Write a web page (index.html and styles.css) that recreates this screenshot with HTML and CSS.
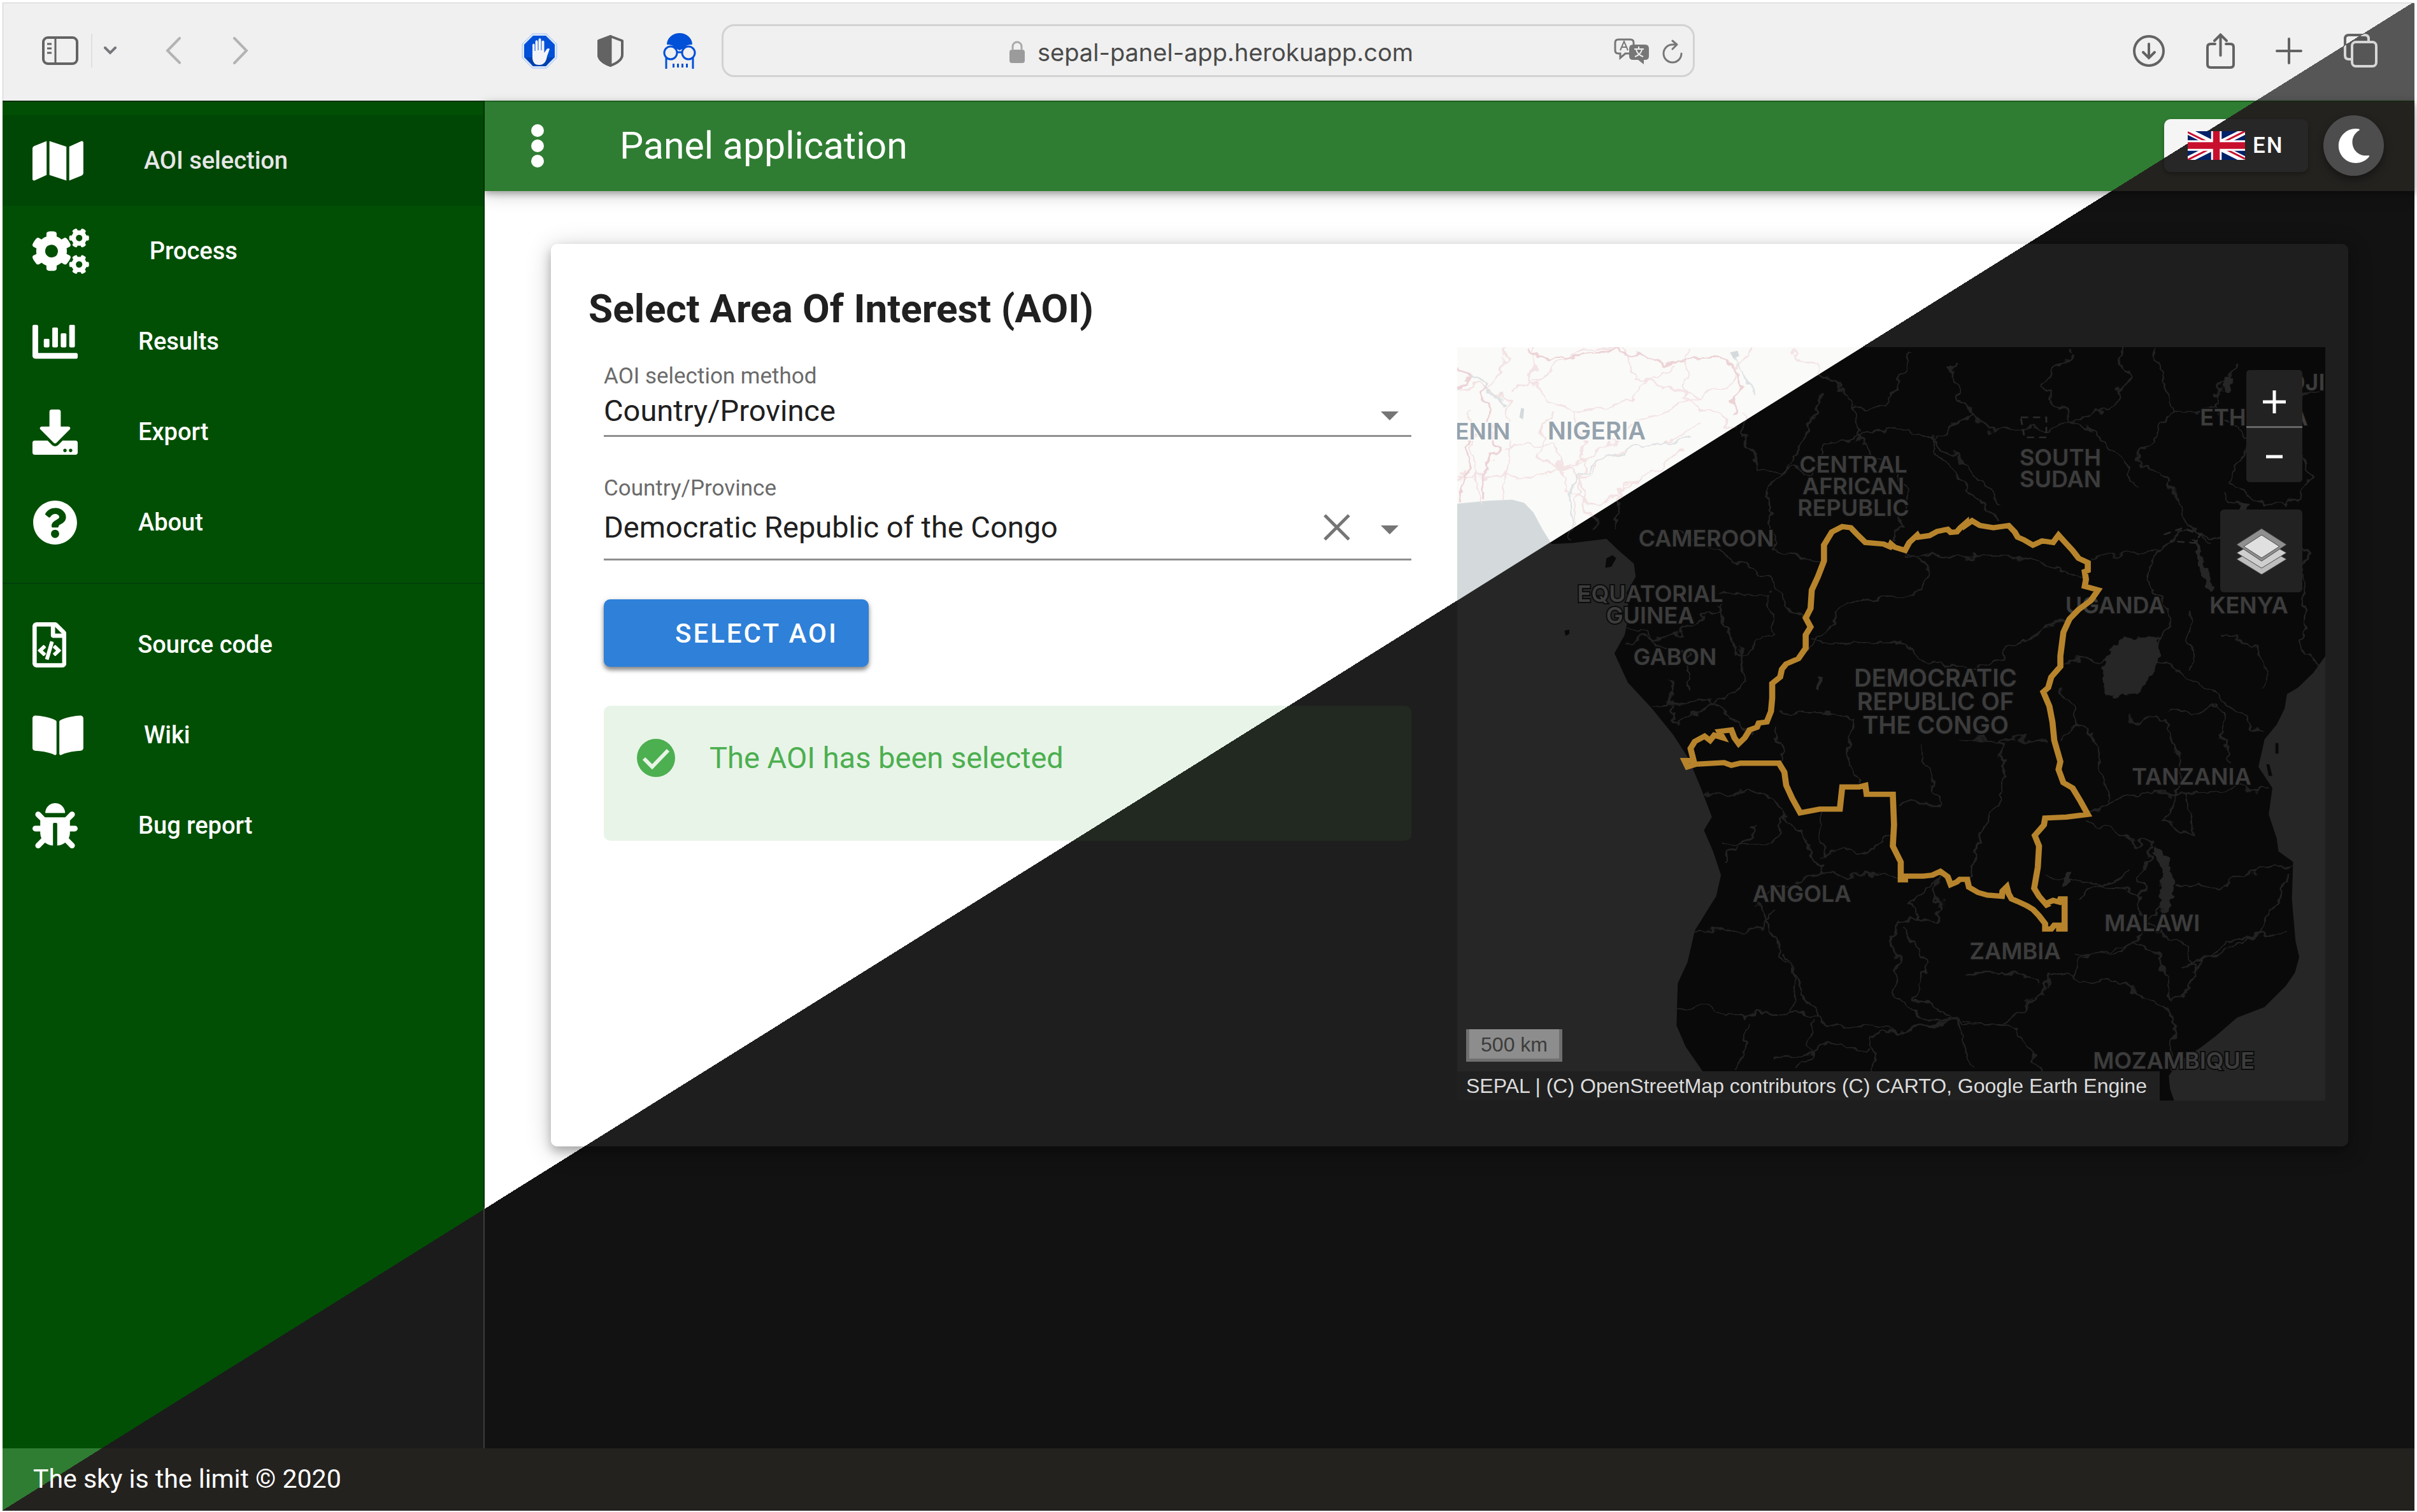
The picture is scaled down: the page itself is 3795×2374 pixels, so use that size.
FILE: index.html
```html
<!DOCTYPE html>
<html lang="en">
<head>
<meta charset="utf-8">
<title>Panel application</title>
<link rel="stylesheet" href="styles.css">
</head>
<body>
<div class="window">
  <header class="browser">
    <div class="browser-nav">
      <button class="tool" aria-label="Show sidebar"><svg width="57" height="45" viewBox="0 0 57 45" fill="none" stroke="#636363" stroke-width="4"><rect x="2" y="2" width="53" height="41" rx="7"/><path d="M21 2v41M8 12h7M8 19h7M8 26h7" stroke-width="3"/></svg></button>
      <span class="tool-rule"></span>
      <button class="tool" aria-label="Tab groups"><svg width="21" height="13" viewBox="0 0 21 13" fill="none" stroke="#77777c" stroke-width="4" stroke-linecap="round"><path d="M2 2l8 8 8-8"/></svg></button>
      <button class="tool tool-back" aria-label="Back"><svg width="25" height="43" viewBox="0 0 25 43" fill="none" stroke="#b3b3b3" stroke-width="4" stroke-linecap="round"><path d="M22 2L3 21.500l19 19"/></svg></button>
      <button class="tool tool-forward" aria-label="Forward"><svg width="25" height="43" viewBox="0 0 25 43" fill="none" stroke="#b3b3b3" stroke-width="4" stroke-linecap="round"><path d="M3 2l19 19.500L3 41"/></svg></button>
    </div>
    <div class="browser-extensions">
      <button class="tool" aria-label="Content blocker"><svg width="56" height="56" viewBox="0 0 56 56"><path d="M17 1h22l16 16v22L39 55H17L1 39V17z" fill="#dfe9fa" stroke="#9fc0f5"/><path d="M18 4h20l14 14v20L38 52H18L4 38V18z" fill="#0050d8"/><path d="M6 38h44L38 52H18z" fill="#0041ae"/><path d="M17 18q2-3 3.500 0v10h1V13q2-4 4 0v14h1V10q2-4 4 0v17h1V13q2-3 4 0v18l4-6q3-2 4.500 0-1 3-4 11-2 14-12.500 14Q18 50 17 40z" fill="#f4f4f8"/></svg></button>
      <button class="tool" aria-label="Privacy report"><svg width="41" height="50" viewBox="0 0 41 50" fill="none" stroke="#636363" stroke-width="4" stroke-linejoin="round"><path d="M20.500 2L2 9v22q0 10 18.500 17Q39 41 39 31V9z"/><path d="M20.500 2L2 9v22q0 10 18.500 17z" fill="#636363"/></svg></button>
      <button class="tool" aria-label="Ghostly reader"><svg width="52" height="56" viewBox="0 0 52 56"><path d="M6 18a20 18 0 0 1 40 0q-9-1-14 6l-6 3-6-3q-5-7-14-6z" fill="#0050d8"/><g fill="none" stroke="#0050d8" stroke-width="3"><circle cx="12" cy="31" r="10"/><circle cx="40" cy="31" r="10"/><path d="M22 30h8M5 39v17M47 39v17"/><path d="M15 51h3M22 51h3M29 51h3M36 51h3" stroke-width="6"/></g></svg></button>
    </div>
    <div class="address">
      <div class="address-host">
        <svg width="24" height="36" viewBox="0 0 24 36"><rect y="14" width="24" height="21" rx="4" fill="#9b9b9b"/><path d="M5 15V9a7 7 0 0 1 14 0v6" fill="none" stroke="#a9a9a9" stroke-width="3"/></svg>
        <span>sepal-panel-app.herokuapp.com</span>
      </div>
      <button class="tool" aria-label="Translate"><svg width="56" height="41" viewBox="0 0 56 41"><path d="M24 24h-6l-8 7v-7H7q-5 0-5-5V7q0-5 5-5h19q5 0 5 5v3" fill="none" stroke="#777" stroke-width="3"/><path d="M10 19l6-14 6 14M12 14h8" fill="none" stroke="#777" stroke-width="2"/><path d="M30 10h19q6 0 6 6v12q0 6-6 6h-2v7l-9-7h-8q-6 0-6-6V16q0-6 6-6z" fill="#777"/><path d="M32 17h15M39 13v4M35 18q2 8 11 11M44 18q-2 8-11 11" fill="none" stroke="#f0f0f0" stroke-width="2"/></svg></button>
      <button class="tool" aria-label="Reload"><svg width="32" height="38" viewBox="0 0 32 38" fill="none" stroke="#777" stroke-width="3" stroke-linecap="round" stroke-linejoin="round"><path d="M30 22a14 14 0 1 1-14-14h7M16 2l7 6-7 7"/></svg></button>
    </div>
    <div class="browser-actions">
      <button class="tool" aria-label="Downloads"><svg width="50" height="50" viewBox="0 0 50 50" fill="none" stroke="#636363" stroke-width="4" stroke-linecap="round"><circle cx="25" cy="25" r="23"/><path d="M25 14v21M16 27l9 9 9-9"/></svg></button>
      <button class="tool" aria-label="Share"><svg width="45" height="56" viewBox="0 0 45 56" fill="none" stroke="#636363" stroke-width="4" stroke-linecap="round"><path d="M14 17H7q-5 0-5 5v27q0 5 5 5h31q5 0 5-5V22q0-5-5-5h-7M22.500 35V3M13 12l9.500-9.500L32 12"/></svg></button>
      <button class="tool" aria-label="New tab"><svg width="42" height="42" viewBox="0 0 42 42" fill="none" stroke="#636363" stroke-width="4" stroke-linecap="round"><path d="M21 2v38M2 21h38"/></svg></button>
      <button class="tool" aria-label="Show tabs"><svg width="53" height="53" viewBox="0 0 53 53" fill="none" stroke-width="4"><defs><linearGradient id="tabs-split" gradientUnits="userSpaceOnUse" x1="8" y1="-5" x2="26" y2="24"><stop offset=".5" stop-color="#636363"/><stop offset=".5" stop-color="#d6d6d6"/></linearGradient></defs><g stroke="url(#tabs-split)"><path d="M13 40H8q-6 0-6-6V8q0-6 6-6h25q6 0 6 6v5"/><rect x="13" y="13" width="38" height="38" rx="6"/></g></svg></button>
    </div>
  </header>

  <div class="app">
    <nav class="drawer">
      <a class="nav-item active" href="#aoi"><svg viewBox="0 0 576 512"><path d="M0 117.660v346.320c0 11.320 11.430 19.060 21.940 14.860L160 416V32L20.120 87.950A32.006 32.006 0 0 0 0 117.660zM192 416l192 64V96L192 32v384zM554.060 33.160L416 96v384l139.880-55.950A31.996 31.996 0 0 0 576 394.340V48.020c0-11.320-11.430-19.060-21.940-14.860z"/></svg><span>AOI selection</span></a>
      <a class="nav-item" href="#process"><svg viewBox="0 0 640 512"><defs><path id="cog-small" d="M512.100 191l-8.200 14.300c-3 5.300-9.400 7.500-15.100 5.400-11.800-4.400-22.600-10.700-32.100-18.600-4.600-3.800-5.800-10.500-2.800-15.700l8.200-14.300c-6.900-8-12.300-17.300-15.900-27.400h-16.500c-6 0-11.200-4.300-12.200-10.300-2-12-2.100-24.600 0-37.100 1-6 6.200-10.400 12.200-10.400h16.500c3.600-10.100 9-19.400 15.900-27.400l-8.200-14.300c-3-5.200-1.900-11.900 2.800-15.700 9.500-7.900 20.400-14.200 32.100-18.600 5.700-2.100 12.100.1 15.100 5.400l8.200 14.300c10.500-1.900 21.200-1.900 31.700 0L552 6.300c3-5.300 9.400-7.500 15.100-5.400 11.800 4.400 22.600 10.700 32.100 18.600 4.600 3.800 5.800 10.500 2.800 15.700l-8.200 14.300c6.900 8 12.300 17.300 15.900 27.400h16.500c6 0 11.200 4.300 12.200 10.300 2 12 2.100 24.600 0 37.100-1 6-6.200 10.400-12.200 10.400h-16.500c-3.600 10.100-9 19.400-15.900 27.400l8.200 14.300c3 5.200 1.900 11.900-2.800 15.700-9.500 7.900-20.400 14.200-32.100 18.600-5.700 2.100-12.100-.1-15.100-5.400l-8.200-14.300c-10.400 1.900-21.200 1.900-31.700 0zm-10.500-58.800c38.500 29.600 82.400-14.300 52.800-52.800-38.500-29.700-82.400 14.300-52.800 52.800z"/></defs><use href="#cog-small"/><use href="#cog-small" y="300"/><path d="M386.300 286.100l33.700 16.800c10.100 5.800 14.500 18.100 10.500 29.100-8.900 24.200-26.400 46.400-42.600 65.800-7.400 8.900-20.200 11.100-30.300 5.300l-29.100-16.800c-16 13.700-34.600 24.600-54.900 31.700v33.600c0 11.600-8.300 21.600-19.700 23.600-24.600 4.200-50.400 4.400-75.900 0-11.500-2-20-11.900-20-23.600V418c-20.300-7.200-38.900-18-54.900-31.700L74 403c-10 5.800-22.900 3.600-30.300-5.300-16.200-19.400-33.300-41.600-42.200-65.700-4-10.900.4-23.200 10.500-29.100l33.300-16.800c-3.900-20.900-3.900-42.400 0-63.400L12 205.800c-10.100-5.800-14.600-18.100-10.500-29 8.900-24.200 26-46.400 42.200-65.800 7.400-8.900 20.200-11.100 30.300-5.300l29.100 16.800c16-13.700 34.600-24.600 54.900-31.700V57.100c0-11.500 8.200-21.500 19.600-23.500 24.600-4.200 50.500-4.400 76-.1 11.500 2 20 11.900 20 23.600v33.600c20.300 7.200 38.900 18 54.900 31.700l29.100-16.800c10-5.800 22.900-3.600 30.300 5.300 16.200 19.400 33.200 41.600 42.100 65.800 4 10.900.1 23.200-10 29.100l-33.700 16.800c3.900 21 3.900 42.500 0 63.500zm-117.600 21.100c59.200-77-28.700-164.900-105.700-105.700-59.200 77 28.700 164.900 105.700 105.700z"/></svg><span>Process</span></a>
      <a class="nav-item" href="#results"><svg viewBox="0 0 512 512"><path d="M332.800 320h38.400c6.400 0 12.800-6.400 12.800-12.800V172.800c0-6.400-6.400-12.800-12.800-12.800h-38.400c-6.400 0-12.800 6.400-12.800 12.800v134.400c0 6.400 6.400 12.800 12.800 12.800zm96 0h38.400c6.400 0 12.800-6.400 12.800-12.800V76.800c0-6.400-6.400-12.800-12.800-12.800h-38.400c-6.400 0-12.800 6.400-12.800 12.800v230.400c0 6.400 6.400 12.800 12.800 12.800zm-288 0h38.400c6.400 0 12.800-6.400 12.800-12.800v-70.400c0-6.400-6.400-12.800-12.800-12.800h-38.400c-6.400 0-12.800 6.400-12.800 12.800v70.400c0 6.400 6.400 12.800 12.800 12.800zm96 0h38.400c6.400 0 12.800-6.400 12.800-12.800V108.800c0-6.400-6.400-12.800-12.800-12.800h-38.400c-6.400 0-12.800 6.400-12.800 12.800v198.400c0 6.400 6.400 12.800 12.800 12.800zM496 384H64V80c0-8.840-7.160-16-16-16H16C7.160 64 0 71.160 0 80v336c0 17.670 14.330 32 32 32h464c8.840 0 16-7.160 16-16v-32c0-8.840-7.160-16-16-16z"/></svg><span>Results</span></a>
      <a class="nav-item" href="#export"><svg viewBox="0 0 512 512"><path d="M216 0h80c13.300 0 24 10.700 24 24v168h87.700c17.800 0 26.700 21.500 14.100 34.100L269.700 378.300c-7.500 7.500-19.800 7.500-27.300 0L90.100 226.100c-12.600-12.600-3.700-34.100 14.100-34.100H192V24c0-13.300 10.700-24 24-24zm296 376v112c0 13.300-10.700 24-24 24H24c-13.300 0-24-10.700-24-24V376c0-13.300 10.700-24 24-24h146.700l49 49c20.100 20.100 52.500 20.100 72.600 0l49-49H488c13.300 0 24 10.700 24 24zm-124 88c0-11-9-20-20-20s-20 9-20 20 9 20 20 20 20-9 20-20zm64 0c0-11-9-20-20-20s-20 9-20 20 9 20 20 20 20-9 20-20z"/></svg><span>Export</span></a>
      <a class="nav-item" href="#about"><svg viewBox="0 0 512 512"><path d="M504 256c0 136.997-111.043 248-248 248S8 392.997 8 256C8 119.083 119.043 8 256 8s248 111.083 248 248zM262.655 90c-54.497 0-89.255 22.957-116.549 63.758-3.536 5.286-2.353 12.415 2.715 16.258l34.699 26.310c5.205 3.947 12.621 3.008 16.665-2.122 17.864-22.658 30.113-35.797 57.303-35.797 20.429 0 45.698 13.148 45.698 32.958 0 14.976-12.363 22.667-32.534 33.976C247.128 238.528 216 254.941 216 296v4c0 6.627 5.373 12 12 12h56c6.627 0 12-5.373 12-12v-1.333c0-28.462 83.186-29.647 83.186-106.667 0-58.002-60.165-102-116.531-102zM256 338c-25.365 0-46 20.635-46 46 0 25.364 20.635 46 46 46s46-20.636 46-46c0-25.365-20.635-46-46-46z"/></svg><span>About</span></a>
      <hr class="nav-rule">
      <a class="nav-item" href="#source"><svg class="narrow" viewBox="0 0 384 512"><path d="M149.900 349.100l-.2-.2-32.800-28.900 32.800-28.900c3.600-3.200 4-8.800.8-12.400l-.2-.2-17.400-18.600c-3.400-3.600-9-3.700-12.400-.4l-57.700 54.100c-3.700 3.500-3.700 9.400 0 12.800l57.700 54.100c1.600 1.500 3.800 2.400 6 2.400 2.400 0 4.800-1 6.400-2.800l17.400-18.600c3.300-3.500 3.100-9.100-.4-12.400zm220-251.200L286 14C277 5 264.800-.1 252.100-.1H48C21.500 0 0 21.500 0 48v416c0 26.500 21.500 48 48 48h288c26.500 0 48-21.500 48-48V131.900c0-12.700-5.100-25-14.100-34zM256 51.900l76.100 76.100H256zM336 464H48V48h160v104c0 13.300 10.700 24 24 24h104zM209.600 214c-4.700-1.400-9.500 1.300-10.900 6L144 408.100c-1.400 4.700 1.300 9.600 6 10.900l24.400 7.100c4.700 1.400 9.600-1.400 10.900-6L240 231.900c1.400-4.700-1.300-9.600-6-10.900zm24.500 76.900l.2.2 32.800 28.900-32.800 28.900c-3.600 3.200-4 8.800-.8 12.400l.2.2 17.400 18.600c3.300 3.500 8.900 3.700 12.400.4l57.700-54.100c3.700-3.500 3.700-9.400 0-12.800l-57.700-54.100c-3.500-3.300-9.100-3.200-12.400.4l-17.400 18.600c-3.300 3.500-3.100 9.100.4 12.400z"/></svg><span>Source code</span></a>
      <a class="nav-item" href="#wiki"><svg viewBox="0 0 576 512"><path d="M542.220 32.050c-54.800 3.110-163.720 14.430-230.960 55.590-4.640 2.840-7.270 7.890-7.270 13.170v363.870c0 11.550 12.630 18.850 23.280 13.490 69.180-34.820 169.230-44.320 218.700-46.920 16.890-.89 30.020-14.430 30.020-30.660V62.750c.01-17.710-15.350-31.740-33.770-30.700zM264.730 87.640C197.500 46.480 88.580 35.170 33.780 32.050 15.360 31.010 0 45.040 0 62.750V400.600c0 16.240 13.130 29.780 30.020 30.660 49.490 2.600 149.590 12.110 218.770 46.950 10.620 5.350 23.210-1.940 23.210-13.460V100.630c0-5.290-2.620-10.140-7.270-12.990z"/></svg><span>Wiki</span></a>
      <a class="nav-item" href="#bugs"><svg viewBox="0 0 512 512"><path d="M511.988 288.900c-.478 17.430-15.217 31.100-32.653 31.100H424v16c0 21.864-4.882 42.584-13.600 61.145l60.228 60.228c12.496 12.497 12.496 32.758 0 45.255-12.498 12.497-32.759 12.496-45.256 0l-54.736-54.736C345.886 467.965 314.351 480 280 480V236c0-6.627-5.373-12-12-12h-24c-6.627 0-12 5.373-12 12v244c-34.351 0-65.886-12.035-90.636-32.108l-54.736 54.736c-12.498 12.497-32.759 12.496-45.256 0-12.496-12.497-12.496-32.758 0-45.255l60.228-60.228C92.882 378.584 88 357.864 88 336v-16H32.666C15.230 320 .491 306.330.013 288.900-.484 270.816 14.028 256 32 256h56v-58.745l-46.628-46.628c-12.496-12.497-12.496-32.758 0-45.255 12.498-12.497 32.758-12.497 45.256 0L141.255 160h229.489l54.627-54.627c12.498-12.497 32.758-12.497 45.256 0 12.496 12.497 12.496 32.758 0 45.255L424 197.255V256h56c17.972 0 32.484 14.816 31.988 32.900zM257 0c-61.856 0-112 50.144-112 112h224C369 50.144 318.856 0 257 0z"/></svg><span>Bug report</span></a>
    </nav>

    <div class="workspace">
      <header class="app-bar">
        <button class="menu-button" aria-label="Toggle drawer"><i></i><i></i><i></i></button>
        <h1>Panel application</h1>
        <button class="language"><svg width="90" height="45" viewBox="0 0 60 30" preserveAspectRatio="none"><path fill="#012169" d="M0 0h60v30H0z"/><path d="M0 0l60 30M60 0L0 30" stroke="#fff" stroke-width="7"/><path d="M0 1l24 12M60 0L36 12M0 30l24-12M60 29L36 17" stroke="#c8102e" stroke-width="2"/><path d="M30 0v30M0 15h60" stroke="#fff" stroke-width="11"/><path d="M30 0v30M0 15h60" stroke="#c8102e" stroke-width="7"/></svg>EN</button>
        <button class="theme" aria-label="Dark theme"><svg width="54" height="54" viewBox="0 0 512 512"><path fill="#fff" d="M283.211 512c78.962 0 151.079-35.925 198.857-94.792 7.068-8.708-.639-21.430-11.562-19.350-124.203 23.654-238.262-71.576-238.262-196.954 0-72.222 38.662-138.635 101.498-174.394 9.686-5.512 7.250-20.197-3.756-22.230A258.156 258.156 0 0 0 283.211 0c-141.309 0-256 114.511-256 256 0 141.309 114.511 256 256 256z"/></svg></button>
      </header>

      <main class="content">
        <section class="card">
          <h2>Select Area Of Interest (AOI)</h2>
          <div class="card-body">
            <form class="aoi-form">
              <div class="field">
                <label for="method">AOI selection method</label>
                <div class="control compact">
                  <select id="method"><option>Country/Province</option></select>
                  <i class="caret"></i>
                </div>
              </div>
              <div class="field">
                <label for="country">Country/Province</label>
                <div class="control">
                  <input id="country" type="text" value="Democratic Republic of the Congo">
                  <button type="button" class="clear" aria-label="Clear"><svg width="42" height="42" viewBox="0 0 42 42" stroke="#757575" stroke-width="5"><path d="M2 2l38 38M40 2L2 40"/></svg></button>
                  <i class="caret"></i>
                </div>
              </div>
              <button type="button" class="select-aoi">Select AOI</button>
              <div class="alert" role="status">
                <svg width="60" height="60" viewBox="0 0 60 60"><circle cx="30" cy="30" r="30" fill="#4caf50"/><path d="M11 31l13 13 25-26" fill="none" stroke="#e8f4e8" stroke-width="6"/></svg>
                <span>The AOI has been selected</span>
              </div>
            </form>

            <div class="map">
              <svg class="map-canvas" viewBox="0 0 1363 1183">
                <defs>
                  <clipPath id="day"><path d="M0 0H636L0 398z"/></clipPath>
                  <filter id="wiggle" x="-5%" y="-5%" width="110%" height="110%"><feTurbulence type="fractalNoise" baseFrequency=".03" numOctaves="3" seed="4"/><feDisplacementMap in="SourceGraphic" scale="34" xChannelSelector="R" yChannelSelector="G"/></filter>
                  <filter id="rough" x="-5%" y="-5%" width="110%" height="110%"><feTurbulence type="fractalNoise" baseFrequency=".07" numOctaves="2" seed="9"/><feDisplacementMap in="SourceGraphic" scale="16" xChannelSelector="R" yChannelSelector="G"/></filter>
                  <path id="land" d="M0 40H1500V600L1465 640L1445 672L1420 700L1402 712L1398 740L1385 770L1365 798L1362 815L1355 850L1378 890L1372 940L1385 985L1388 1010L1412 1030L1410 1100L1416 1180L1422 1210L1415 1240L1400 1265L1365 1305L1320 1325L1285 1360L1260 1382L1225 1408L1208 1435L1210 1460L1222 1500H470L442 1425L415 1380L400 1340L402 1260L418 1220L430 1160L465 1095L473 1055L460 1010L445 970L458 945L440 890L420 835L395 790L360 740L320 690L298 635L315 600L322 560L318 520L333 490L330 465L305 440L285 418L230 426L195 428L180 400L165 368L150 350L130 344L90 346L0 356z"/>
                  <path id="roads" d="M40 90L80 125 125 160 120 240 115 350M40 130H90L130 55M125 140L190 100 240 60 320 55M160 55L170 140 230 180 320 160 360 120 400 90M190 180L170 260 240 300 310 250 380 240 440 200M110 250L200 240 220 330 280 350 350 300M230 180L250 240 225 420M40 300H190L290 240 340 190 480 130 520 55M320 55L330 110 440 150M60 180L75 350M240 300L265 400M420 60L410 150 500 210M590 60L650 110 690 170 750 165 790 55M640 140L600 250 550 340 560 440M500 180L540 290 620 290 650 240 730 210 810 220 860 260 930 350M690 170L700 230 780 320 760 420M850 90L870 150 880 185 930 215 1000 210 1100 180 1140 120 1130 55M880 185L820 230 830 260 900 350 930 385M1050 60L1000 130 1060 200 1130 260 1150 320M1190 60L1210 180 1150 270 1200 300 1240 390 1280 430M1320 80L1280 170 1340 230 1310 320 1400 360 1440 300 1400 160 1465 130M1210 180L1280 170M1300 330L1390 460 1430 420M1190 440L1180 500 1210 560 1190 620M1080 455L1190 440 1240 400 1300 420 1430 430M1430 430V640L1450 670M300 400L310 320 350 300 410 250M400 400L490 460 550 500 610 570M560 440L640 460M470 520L550 520 560 600 500 640 470 540M320 610L400 600 480 540M315 580L420 640 420 700M390 690L400 770 520 690 500 620M360 740L450 720 530 790M610 640L680 540 800 520 820 480 780 440M780 450L900 455 990 460 1070 490M620 610L700 620 760 610 800 650 900 660 990 600 1040 570M570 740L690 760 680 850 700 880M800 810L830 920 760 920M930 800L940 880 900 980 880 1060M860 800H1010M560 780L575 850M440 900L540 900 580 940M640 930L640 1020 720 1000 760 980M470 1000L560 990 580 940 640 1050 530 1100 570 1200 630 1320M480 1030L530 960M640 1050L770 1060M430 1160L540 1160 560 1120M760 1140H830V1060L780 1110 800 1140M760 1140V1280L800 1320 840 1330M400 1310L450 1305 480 1320H630L650 1340 770 1350 860 1325 870 1340 940 1340 970 1300 1000 1280 1010 1240 1050 1250 1060 1215 1150 1180M725 1425V1360L860 1330M590 1320V1230L580 1200M770 1150L810 1220 790 1290 860 1330 890 1420M880 1240H960L1000 1260M520 1330L500 1425M620 1330V1400H560M720 1380H640L600 1425M1050 1250L1130 1260 1220 1320 1215 1425M1150 1180L1190 1200 1220 1300M1080 950L1130 980 1175 1000 1160 1080 1170 1150 1240 1190 1250 1250 1220 1300M1220 1080L1290 1080 1340 1050 1410 1035M1070 940L1150 900 1240 900 1370 890M1110 920L1090 820 1060 770M1030 650L1100 645 1200 655 1290 720 1365 790M1140 760L1200 760 1230 860 1200 950 1250 980 1240 900M1240 560L1250 660M1290 600L1340 610 1370 660 1360 700M1210 750L1290 740 1310 850M1030 700L1050 720 1060 770 1030 800M1010 1050L1100 1080 1160 1090M1050 1210L1130 1200 1200 1120M1400 1160L1300 1180 1240 1240M1230 1230L1350 1170 1410 1050M1140 1050L1060 1100M870 1330L960 1350 1000 1425"/>
                </defs>
                <g class="night">
                  <rect class="water" width="1363" height="1183"/>
                  <g transform="scale(.9566 .829) translate(-40 -55)">
                    <use href="#land" class="ground"/>
                    <path class="ground" d="M285 455l10-6 6 6-8 16-10 2zM216 592l8-2v8l-6 4zM1383 805l5 0 0 20-5 0zM1368 845l5 0 5 22-6 0z"/>
                    <g class="road"><use href="#roads" filter="url(#wiggle)"/></g>
                    <path class="water" filter="url(#rough)" d="M1108 715L1098 680 1110 630 1135 605 1190 603 1195 630 1180 680 1155 712zM1185 1000l20 20 12 50-4 40-16 22-6-50 8-30-18-46zM1255 420l10 40 16 50-6 8-18-50-8-46zM1300 110l14 4-6 28-12-4zM1040 1050l8 2-6 24-10 0zM630 680l8 0-2 26-6-4zM1325 345l14 8-4 12-14 4z"/>
                    <path class="road dashed" d="M965 188h42v38h-36zM1200 410l30-12 30 12-10 16-40-4"/>
                  </g>
                  <g class="place">
                    <text><tspan x="622" y="197">CENTRAL</tspan><tspan x="622" dy="34">AFRICAN</tspan><tspan x="622" dy="34">REPUBLIC</tspan></text>
                    <text><tspan x="947" y="186">SOUTH</tspan><tspan x="947" dy="34">SUDAN</tspan></text>
                    <text x="391" y="313">CAMEROON</text>
                    <text><tspan x="303" y="400">EQUATORIAL</tspan><tspan x="303" dy="34">GUINEA</tspan></text>
                    <text x="342" y="499">GABON</text>
                    <text x="1033" y="418">UGANDA</text>
                    <text x="1243" y="418">KENYA</text>
                    <text x="1251" y="123">ETHIOPIA</text>
                    <text x="1334" y="68">DJI</text>
                    <text class="major"><tspan x="751" y="533">DEMOCRATIC</tspan><tspan x="751" dy="37">REPUBLIC OF</tspan><tspan x="751" dy="37">THE CONGO</tspan></text>
                    <text x="1153" y="687">TANZANIA</text>
                    <text x="541" y="871">ANGOLA</text>
                    <text x="1091" y="917">MALAWI</text>
                    <text x="876" y="961">ZAMBIA</text>
                    <text x="1125" y="1133">MOZAMBIQUE</text>
                  </g>
                </g>
                <g class="dayside" clip-path="url(#day)">
                  <rect class="water" width="1363" height="1183"/>
                  <g transform="scale(.9566 .829) translate(-40 -55)">
                    <use href="#land" class="ground"/>
                    <g class="road"><use href="#roads" filter="url(#wiggle)"/></g>
                    <g class="river" filter="url(#wiggle)"><path d="M50 100L110 150 120 170M420 230L320 250 240 290 225 330V420M490 65L510 100 530 150"/></g>
                    <path class="trunk" filter="url(#wiggle)" d="M40 90L60 110 40 130M150 60L190 80 300 60 380 85 480 75M480 75L510 130 490 180M60 220L50 350M85 130L100 250 80 345"/>
                    <path class="water" d="M488 65l12-3 3 10-10 4zM145 170l5 2-2 20-6-4z"/>
                  </g>
                  <g class="place"><text class="major" x="219" y="145">NIGERIA</text><text x="40" y="145">ENIN</text></g>
                </g>
                <path class="outline" transform="scale(.9566 .829) translate(-40 -55)" d="M413 838L428 838 423 815 430 802 446 792 455 800 462 790 476 795 470 783 490 780 495 795 502 806 512 795 520 780 532 775 535 767 548 765 555 745 557 720 557 692 570 680 573 665 580 655 600 645 612 625 612 600 620 585 612 568 620 550 622 515 632 490 642 460 642 430 655 405 672 395 686 397 695 408 710 425 740 428 750 433 752 428 758 434 775 440 782 425 795 411 797 415 815 412 828 404 845 400 850 406 860 405 866 397 875 388 875 392 885 384 898 393 920 397 945 393 955 405 960 415 970 420 985 430 1000 422 1018 425 1027 411 1038 425 1050 440 1060 455 1075 463 1075 478 1070 480 1072 495 1070 508 1092 515 1080 535 1060 552 1045 570 1035 595 1030 640 1030 660 1015 680 1010 700 1002 708 1012 735 1017 765 1020 800 1030 840 1027 855 1035 880 1050 890 1063 915 1075 940 1040 945 1005 947 1003 960 988 980 995 1000 993 1040 987 1080 995 1095 1010 1115 1008 1108 1018 1103 1028 1106 1030 1100 1037 1100 1037 1157 1028 1157 1028 1150 1020 1150 1015 1157 1005 1157 1005 1147 995 1132 985 1120 975 1113 960 1105 950 1100 945 1090 942 1077 935 1085 934 1095 910 1093 895 1088 880 1078 877 1063 865 1063 860 1068 850 1073 845 1058 833 1048 820 1055 805 1057 775 1057 775 1064 768 1064 768 1030 755 1000 757 960 755 902 712 902 710 885 700 888 672 888 668 930 635 930 603 937 590 910 580 885 577 860 568 843 505 843 490 847 478 842 432 845 418 850z"/>
              </svg>
              <div class="map-zoom">
                <button aria-label="Zoom in"><svg width="36" height="36" viewBox="0 0 36 36" stroke="#fff" stroke-width="5"><path d="M18 0v36M0 18h36"/></svg></button>
                <button aria-label="Zoom out"><svg width="36" height="36" viewBox="0 0 36 36" stroke="#fff" stroke-width="5"><path d="M5 18h26"/></svg></button>
              </div>
              <button class="map-layers" aria-label="Layers"><svg width="78" height="74" viewBox="0 0 78 74"><g stroke="#4a4a4a"><path d="M39 28L0 50l39 24 39-24z" fill="#bdbdbd"/><path d="M39 18L0 40l39 24 39-24z" fill="#cfcfcf"/><path d="M39 2L0 27l39 26 39-26z" fill="#8f8f8f"/><path d="M39 12L11 30l28 18 28-18z" fill="#e0e0e0"/></g></svg></button>
              <div class="map-scale">500 km</div>
              <div class="map-attribution">SEPAL | (C) OpenStreetMap contributors (C) CARTO, Google Earth Engine</div>
            </div>
          </div>
        </section>
      </main>
    </div>
  </div>

  <footer class="footer">The sky is the limit © 2020</footer>
</div>
</body>
</html>
```
FILE: styles.css
```css
/* Every themed surface paints the same window-sized gradient, so the
   light/dark seam runs corner to corner through all of them. */
* { box-sizing: border-box; }

body {
  margin: 0;
  background: #fff;
  font-family: Roboto, sans-serif;
}

button {
  margin: 0;
  padding: 0;
  border: 0;
  background: none;
  font: inherit;
  color: inherit;
}

svg { display: block; }

.window {
  display: grid;
  grid-template-rows: auto 1fr auto;
  min-height: 100vh;
  padding: 4px 4px 2px;
}

/* Browser chrome */
.browser {
  position: relative;
  display: flex;
  align-items: center;
  height: 154px;
  padding: 0 58px 4px 61px;
  border-top: 1px solid #cfcfcf;
  border-left: 1px solid #cfcfcf;
  background: linear-gradient(to bottom right, #f0f0f0 50%, #565656 50%) fixed;
}
.tool { display: flex; align-items: center; justify-content: center; }
.browser-nav { display: flex; align-items: center; width: 753px; }
.tool-rule { width: 2px; height: 53px; margin: 0 18px 0 20px; background: #dfdfdf; }
.tool-back { margin-left: 76px; }
.tool-forward { margin-left: 80px; }
.browser-extensions { display: flex; align-items: center; justify-content: space-between; width: 274px; }
.address {
  display: flex;
  align-items: center;
  gap: 20px;
  width: 1528px;
  height: 83px;
  margin-left: 40px;
  padding: 2px 16px 0 0;
  border: 3px solid #d2d2d2;
  border-radius: 20px;
}
.address-host {
  display: flex;
  flex: 1;
  align-items: center;
  justify-content: center;
  gap: 20px;
  padding: 2px 0 0 154px;
  font-family: Inter, sans-serif;
  font-size: 38px;
  color: #4a4a4a;
}
.browser-actions { display: flex; align-items: center; justify-content: space-between; width: 384px; margin-left: auto; }

/* App frame */
.app { display: grid; grid-template-columns: 757px 1fr; }
.drawer {
  position: relative;
  z-index: 1;
  padding-top: 21px;
  border-top: 2px solid #023003;
  border-right: 2px solid #3c3c3c;
  border-image: linear-gradient(to bottom, #023003 82%, #3c3c3c 82%) 2;
  border-left: 0;
  border-bottom: 0;
  background: linear-gradient(to bottom right, #004f04 50%, #1b1b1b 50%) fixed;
}
.nav-item {
  display: flex;
  align-items: center;
  gap: 95px;
  height: 142px;
  padding-left: 47px;
  font-size: 38px;
  font-weight: 500;
  color: #fff;
  text-decoration: none;
}
.nav-item svg { height: 71px; fill: #fff; }
.nav-item .narrow { margin-right: 17px; }
.nav-item.active { background: #004705; color: #e6e6e6; }
.nav-rule { height: 2px; margin: 24px 0; border: 0; background: #00400a; }

.workspace { display: flex; flex-direction: column; }
.app-bar {
  position: relative;
  display: flex;
  align-items: center;
  height: 142px;
  padding: 0 48px 3px 73px;
  border-top: 2px solid rgba(0, 50, 0, .4);
  background: linear-gradient(to bottom right, #2f7d32 50%, #24221f 50%) fixed;
  box-shadow: 0 4px 10px rgba(0, 0, 0, .3), 0 10px 24px rgba(0, 0, 0, .14);
  color: #fff;
}
.menu-button { display: grid; gap: 4px; }
.menu-button i { width: 20px; height: 20px; border-radius: 50%; background: #fff; }
.app-bar h1 { flex: 1; margin: 0 0 0 119px; font-size: 59px; font-weight: 400; }
.language {
  display: flex;
  align-items: center;
  gap: 12px;
  width: 226px;
  height: 83px;
  padding-left: 37px;
  border-radius: 10px;
  background: linear-gradient(to bottom right, #f5f5f5 50%, #272727 50%) fixed;
  box-shadow: 0 3px 6px rgba(0, 0, 0, .3);
  font-size: 35px;
  font-weight: 500;
  letter-spacing: 2px;
}
.theme {
  display: flex;
  align-items: center;
  justify-content: center;
  width: 95px;
  height: 95px;
  margin-left: 24px;
  border-radius: 50%;
  background: #4d4d4d;
  box-shadow: 0 6px 14px rgba(0, 0, 0, .4);
}
.content {
  flex: 1;
  padding: 83px 104px;
  background: linear-gradient(to bottom right, #fff 50%, #121212 50%) fixed;
}

/* AOI card */
.card {
  padding: 66px 36px 72px 59px;
  border-radius: 10px;
  background: linear-gradient(to bottom right, #fff 50%, #1e1e1e 50%) fixed;
  box-shadow: 0 8px 16px rgba(0, 0, 0, .25), 0 6px 40px rgba(0, 0, 0, .2);
}
.card h2 { margin: 0 0 24px; font-size: 62px; line-height: 72px; font-weight: 700; color: #202020; }
.card-body { display: grid; grid-template-columns: 1268fr 1363fr; gap: 72px; padding-left: 24px; }
.aoi-form { display: flex; flex-direction: column; align-items: flex-start; gap: 61px; padding-top: 26px; }
.field { width: 100%; }
.field label { display: block; font-size: 35px; line-height: 40px; color: #6b6b6b; }
.control {
  display: flex;
  align-items: center;
  height: 93px;
  padding: 0 20px 8px 0;
  border-bottom: 3px solid #8f8f8f;
}
.control.compact { height: 75px; padding-bottom: 4px; }
.control select,
.control input {
  flex: 1;
  min-width: 0;
  padding: 0;
  border: 0;
  background: none;
  appearance: none;
  font: 47px/56px Roboto, sans-serif;
  color: #202020;
}
.caret { border: 14px solid transparent; border-top-color: #757575; border-bottom: 0; }
.control .caret { margin-top: 8px; }
.control.compact .caret { margin-top: 16px; }
.clear { margin-right: 48px; }
.select-aoi {
  height: 106px;
  padding: 0 48px 0 112px;
  border-radius: 10px;
  background: #2e80d8;
  box-shadow: 0 5px 6px rgba(0, 0, 0, .4), 0 2px 12px rgba(0, 0, 0, .15);
  font-size: 42px;
  font-weight: 500;
  letter-spacing: 3px;
  text-transform: uppercase;
  color: #fff;
}
.alert {
  display: flex;
  align-items: flex-start;
  gap: 54px;
  width: 100%;
  height: 212px;
  padding: 52px;
  border-radius: 10px;
  background: linear-gradient(to bottom right, #e8f4e8 50%, #222921 50%) fixed;
  font-size: 47px;
  line-height: 60px;
  color: #4caf50;
}

/* Map */
.map { position: relative; overflow: hidden; align-self: start; }
.map-canvas { width: 100%; height: auto; }
.night .water { fill: #262626; stroke: none; }
.night .ground { fill: #090909; }
.dayside .water { fill: #d4dadc; }
.dayside .ground { fill: #fafaf8; }
.road, .river, .trunk, .outline { fill: none; stroke-width: 3; stroke-linejoin: round; }
.road { stroke: #222; }
.dashed { stroke: #2a2a2a; stroke-dasharray: 12 8; }
.dayside .road { stroke: #f3e3e4; }
.river { stroke: #dde2e4; }
.trunk { stroke: #ecd3d6; stroke-width: 4; }
.outline { stroke: #b7842c; stroke-width: 10; stroke-linejoin: miter; }
.place { font: 600 36px Inter, sans-serif; text-anchor: middle; fill: #3c3c3c; stroke: #0c0c0c; stroke-width: 4; paint-order: stroke; }
.place .major { font-size: 38px; }
.dayside .place { fill: #94a2ad; stroke: #fafaf8; }
.map-zoom { position: absolute; top: 36px; right: 36px; width: 88px; border-radius: 5px; overflow: hidden; background: #222; }
.map-zoom button { display: flex; align-items: center; justify-content: center; width: 100%; height: 88px; padding-top: 12px; }
.map-zoom button + button { border-top: 3px solid #666; padding-top: 4px; }
.map-layers {
  position: absolute;
  top: 255px;
  right: 36px;
  display: flex;
  align-items: center;
  justify-content: center;
  width: 129px;
  height: 130px;
  border-radius: 6px;
  background: #222;
}
.map-scale {
  position: absolute;
  left: 14px;
  bottom: 61px;
  width: 151px;
  height: 51px;
  border: 5px solid #6f6f6f;
  border-top: 0;
  background: #8d8d8d;
  font: 32px/48px "Liberation Sans", sans-serif;
  text-align: center;
  color: #3c3c3c;
}
.map-attribution {
  position: absolute;
  left: 0;
  bottom: 0;
  padding: 0 20px 0 14px;
  background: #202020;
  font: 32px/46px "Liberation Sans", sans-serif;
  color: #dcdcdc;
}

.footer {
  height: 98px;
  padding-left: 48px;
  background: linear-gradient(to bottom right, #2f7d32 50%, #24221f 50%) fixed;
  font-size: 41px;
  line-height: 97px;
  color: #fff;
}
```
